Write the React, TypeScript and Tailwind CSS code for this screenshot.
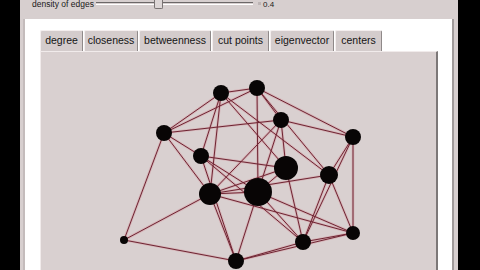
const nodes: Record<number, [number, number, number]> = {
  1: [220, 93, 8],
  2: [256, 88, 8],
  3: [163, 133, 8],
  4: [280, 120, 8],
  5: [352, 137, 8],
  6: [200, 156, 8],
  7: [285, 168, 12],
  8: [328, 175, 9],
  9: [209, 194, 11],
  10: [257, 192, 14],
  11: [123, 240, 4],
  12: [302, 242, 8],
  13: [352, 233, 7],
  14: [235, 261, 8],
};

const edges: [number, number][] = [
  [11, 3], [11, 9], [11, 14], [3, 1], [3, 2], [3, 4], [3, 6], [3, 9],
  [1, 2], [1, 6], [1, 9], [1, 7], [1, 8], [2, 4], [2, 5], [2, 10], [2, 8],
  [4, 5], [4, 7], [4, 9], [4, 10], [5, 8], [5, 13], [5, 12],
  [6, 7], [6, 10], [6, 12], [6, 14], [7, 9], [7, 10], [7, 12], [9, 8],
  [8, 12], [8, 13], [9, 10], [9, 14], [9, 13], [10, 14], [10, 12], [10, 13],
  [12, 13], [14, 12], [14, 13],
];

const tabs = [
  { label: "degree", w: "w-[43px]" },
  { label: "closeness", w: "w-[54px]" },
  { label: "betweenness", w: "w-[72px]" },
  { label: "cut points", w: "w-[57px]" },
  { label: "eigenvector", w: "w-[64px]" },
  { label: "centers", w: "w-[47px]" },
];

function Graph() {
  return (
    <svg width="399" height="219" viewBox="39 51 399 219" className="block">
      {edges.map(([a, b], i) => (
        <line
          key={"h" + i}
          x1={nodes[a][0]}
          y1={nodes[a][1]}
          x2={nodes[b][0]}
          y2={nodes[b][1]}
          stroke="#d49aa3"
          strokeWidth={2.6}
          strokeOpacity={0.55}
        />
      ))}
      {edges.map(([a, b], i) => (
        <line
          key={"e" + i}
          x1={nodes[a][0]}
          y1={nodes[a][1]}
          x2={nodes[b][0]}
          y2={nodes[b][1]}
          stroke="#6e2432"
          strokeWidth={1}
        />
      ))}
      {Object.entries(nodes).map(([k, [x, y, r]]) => (
        <circle key={k} cx={x} cy={y} r={r} fill="#080505" />
      ))}
    </svg>
  );
}

export default function App() {
  return (
    <div className="w-[480px] h-[270px] bg-black flex overflow-hidden font-['Liberation_Sans',Arial,sans-serif]">
      <div className="w-[20px] shrink-0" />
      {/* window */}
      <div className="w-[438px] shrink-0 bg-[#d7cfcf] flex flex-col">
        {/* slider row */}
        <div className="h-[19px] shrink-0 flex items-start relative">
          <span className="ml-[12px] w-[60px] text-[8.5px] leading-[9px] text-[#1a1a1a] whitespace-nowrap">density of edges</span>
          <div className="ml-[4px] mt-[2px] w-[157px] h-[3px] border-t border-[#6c6868] border-b border-b-white relative">
            <div className="absolute left-[58px] top-[-6px] w-[9px] h-[12px] bg-[#ddd6d6] border border-[#7a7474] border-t-0 rounded-b-[2px]" />
          </div>
          <span className="ml-[5px] mt-[2px] w-[3px] h-[3px] bg-[#bdb5b5]" />
          <span className="ml-[2px] text-[8px] leading-[9px] text-[#1a1a1a]">0.4</span>
        </div>
        {/* white pane */}
        <div className="flex-1 ml-[3px] mr-[4px] bg-white border-l-2 border-[#c4bcbc] border-r-2 border-r-[#a09a9a] pl-[15px] pr-[14px] pt-[11px] flex flex-col">
          {/* tabs */}
          <div className="flex gap-px h-[21px] shrink-0 items-end">
            {tabs.map((t) => (
              <div
                key={t.label}
                className={`${t.w} h-[21px] bg-[#d4cccc] border-t border-l border-[#f4eeee] border-r border-r-[#8f8989] rounded-t-[2px] flex items-center justify-center text-[10.5px] text-[#141414]`}
              >
                {t.label}
              </div>
            ))}
          </div>
          {/* tab panel */}
          <div className="flex-1 bg-[#d9d0d0] border-t border-l border-[#f1ebeb] border-r-2 border-r-[#7d7878] overflow-hidden">
            <div className="ml-[-1px] mt-[-1px]">
              <Graph />
            </div>
          </div>
        </div>
      </div>
      <div className="flex-1" />
    </div>
  );
}
